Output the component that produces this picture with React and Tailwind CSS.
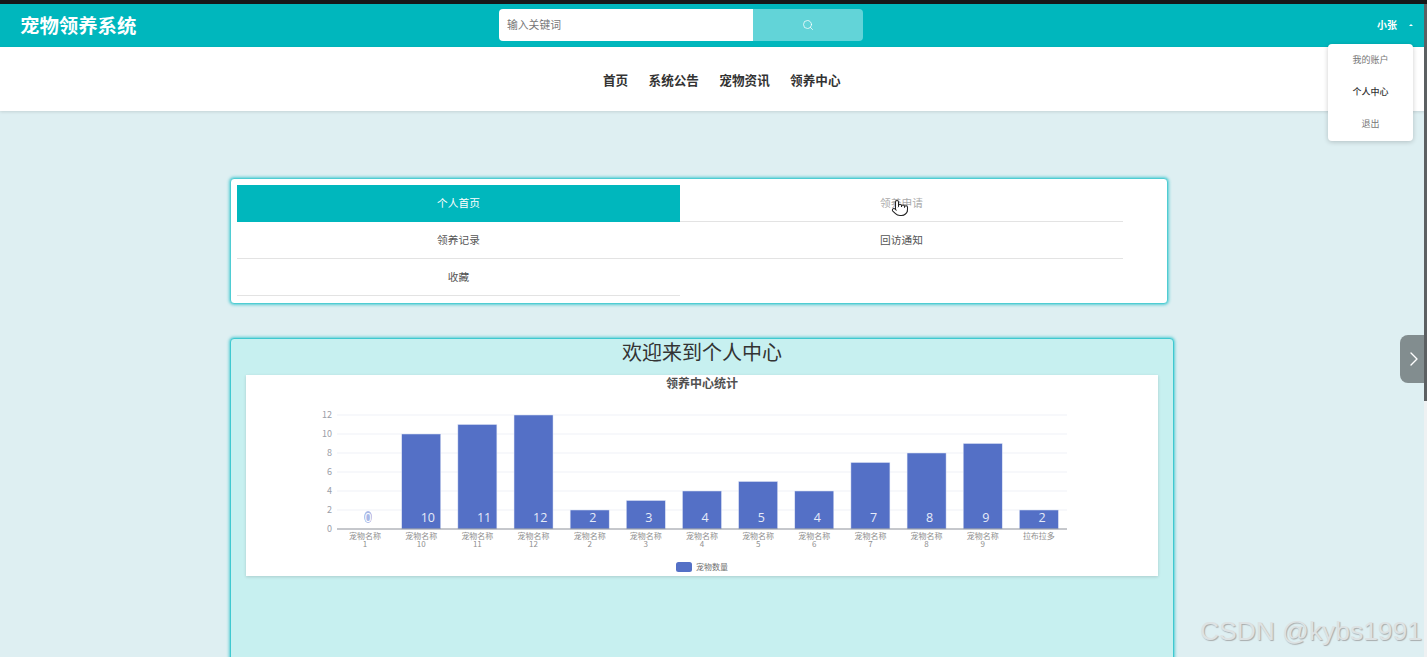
import React from 'react';
import { Search, ChevronRight, Pointer } from 'lucide-react';

const navItems = ['首页', '系统公告', '宠物资讯', '领养中心'];
const tabs = ['个人首页', '领养申请', '领养记录', '回访通知', '收藏'];
const stats = [
    ['宠物名称', '1', 0],
    ['宠物名称', '10', 10],
    ['宠物名称', '11', 11],
    ['宠物名称', '12', 12],
    ['宠物名称', '2', 2],
    ['宠物名称', '3', 3],
    ['宠物名称', '4', 4],
    ['宠物名称', '5', 5],
    ['宠物名称', '6', 4],
    ['宠物名称', '7', 7],
    ['宠物名称', '8', 8],
    ['宠物名称', '9', 9],
    ['拉布拉多', '', 2],
];

const Chart = () => {
    const left = 91;
    const step = 56.15;
    const base = 154;
    const unit = 9.5;
    return (
        <svg viewBox="0 0 912 201" className="block w-full h-full">
            <text x="456" y="13" textAnchor="middle" fontSize="12" fontWeight="700" fill="#505050">领养中心统计</text>
            {[0, 2, 4, 6, 8, 10, 12].map((v) => (
                <g key={v}>
                    {v > 0 && <line x1={left} x2="821" y1={base - v * unit} y2={base - v * unit} stroke="#eff1f7" />}
                    <text x="86" y={base - v * unit + 3} textAnchor="end" fontSize="9" fill="#9a9ea8">{v}</text>
                </g>
            ))}
            {stats.map(([name, num, value], i) => {
                const cx = left + step * i + step / 2;
                return (
                    <g key={i}>
                        {value > 0 && <rect x={cx - 19.5} y={base - value * unit} width="39" height={value * unit} fill="#5470c6" stroke="#dfe5f6" strokeWidth="0.5" />}
                        {value === 0 && <ellipse cx={cx + 3} cy="142" rx="4" ry="6" fill="#a9b8e6" />}
                        <text x={cx - 0.5} y="146.5" fontSize="12.5" fontWeight="500" fill={value === 0 ? '#ffffff' : '#e6ebf8'} className="font-['Open_Sans',sans-serif]">{value}</text>
                        <text x={cx} y="164" textAnchor="middle" fontSize="8" fill="#909090">{name}</text>
                        {num && <text x={cx} y="172" textAnchor="middle" fontSize="8" fill="#909090">{num}</text>}
                    </g>
                );
            })}
            <line x1={left} x2="821" y1={base} y2={base} stroke="#8c9099" />
            <rect x="430" y="187" width="16" height="10" rx="2.5" fill="#5470c6" />
            <text x="450" y="195" fontSize="8" fill="#707070">宠物数量</text>
        </svg>
    );
};

const App = () => {
    return (
        <div className="relative h-[657px] w-[1427px] overflow-hidden bg-[#deeff2] font-['Noto_Sans_CJK_SC','Liberation_Sans',sans-serif]">
            <div className="h-1 bg-[#161819]" />

            <header className="flex h-[43px] items-center bg-[#00b7bd] pb-[2px] pl-5 pr-[14px]">
                <div className="w-[479px] text-[19.4px] font-bold text-white">宠物领养系统</div>
                <div className="flex h-8 w-[364px]">
                    <div className="flex w-[254px] items-center rounded-l-sm bg-white pl-2 text-[10.8px] text-[#777]">输入关键词</div>
                    <button className="flex flex-1 items-center justify-center rounded-r-sm bg-[#62d4d8]">
                        <Search size={12} color="#ffffff" strokeWidth={1.5} />
                    </button>
                </div>
                <div className="ml-auto flex items-center gap-3 text-white">
                    <span className="text-[10px] font-bold">小张</span>
                    <span className="h-0 w-0 border-x-[2px] border-b-[2px] border-x-transparent border-b-white" />
                </div>
            </header>

            <nav className="flex h-16 items-center gap-[20.4px] bg-white pl-[603px] pt-[2px] shadow-[0_1px_3px_rgba(0,0,0,0.12)]">
                {navItems.map((item) => (
                    <a key={item} className="text-[12.6px] font-bold text-[#333]">{item}</a>
                ))}
            </nav>

            <main className="pl-[230px] pt-[67px]">
                <section className="h-[126px] w-[938px] rounded border border-[#4fcdd3] bg-white p-[6px] shadow-[0_0_3px_1px_rgba(30,190,200,0.7)]">
                    <div className="grid w-[886px] grid-cols-2">
                        {tabs.map((tab, i) => (
                            <div
                                key={tab}
                                className={
                                    'flex h-[37px] items-center justify-center text-[10.7px] ' +
                                    (i === 0
                                        ? 'bg-[#00b7bd] text-white'
                                        : 'border-b border-[#e3e3e3] ' + (i === 1 ? 'text-[#aaa]' : 'text-[#555]'))
                                }
                            >
                                {tab}
                            </div>
                        ))}
                    </div>
                </section>

                <section className="mt-[34px] h-[400px] w-[944px] rounded-sm border border-[#3fc9d0] bg-[#c7f0f0] px-[15px] shadow-[0_0_3px_1px_rgba(30,190,200,0.7)]">
                    <h1 className="h-[36px] text-center text-[20px] leading-[26px] text-[#333]">欢迎来到个人中心</h1>
                    <div className="h-[201px] w-[912px] bg-white shadow-[0_1px_3px_rgba(0,0,0,0.15)]">
                        <Chart />
                    </div>
                </section>
            </main>

            {/* user menu, open */}
            <div className="absolute left-[1328px] top-[44px] flex h-[97px] w-[85px] flex-col rounded bg-white text-[9px] text-[#777] shadow-[0_1px_5px_rgba(0,0,0,0.2)]">
                <div className="flex h-8 items-center justify-center pb-[1px]">我的账户</div>
                <div className="flex h-8 items-center justify-center pb-[1px] font-medium text-[#333]">个人中心</div>
                <div className="flex h-8 items-center justify-center pb-[1px]">退出</div>
            </div>

            {/* mouse cursor */}
            <Pointer className="absolute left-[891px] top-[199px]" size={18} fill="#ffffff" color="#222222" strokeWidth={1.4} />

            {/* side drawer handle */}
            <div className="absolute right-0 top-[335px] flex h-[48px] w-[27px] items-center justify-center rounded-l-lg bg-[#828d8f]">
                <ChevronRight size={24} color="#ffffff" strokeWidth={1.4} />
            </div>

            {/* scrollbar */}
            <div className="absolute bottom-0 right-0 top-1 w-[3px] bg-[#eef1f2]">
                <div className="h-[397px] bg-[#5c6062]" />
            </div>

            <div className="absolute left-[1200px] top-[612px] whitespace-nowrap font-['Liberation_Sans',sans-serif] text-[26.4px] leading-[38px] text-[#dde2e3] [text-shadow:1px_1px_1px_#a8acad]">
                CSDN @kybs1991
            </div>
        </div>
    );
};

export default App;
